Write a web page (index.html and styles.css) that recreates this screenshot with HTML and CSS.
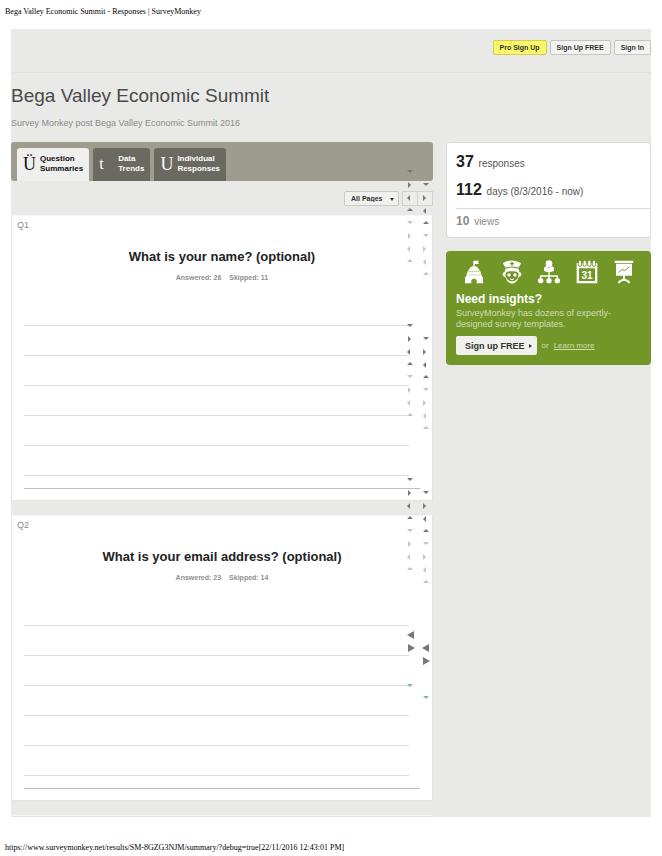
FILE: index.html
```html
<!DOCTYPE html>
<html lang="en">
<head>
    <meta charset="UTF-8">
    <meta name="viewport" content="width=device-width, initial-scale=1.0">
    <title>Bega Valley Economic Summit - Responses | SurveyMonkey</title>
    <link rel="stylesheet" href="styles.css">
</head>
<body>
    <div class="print-line">Bega Valley Economic Summit - Responses | SurveyMonkey</div>

    <div class="page">
        <header class="topbar">
            <button class="btn pro">Pro Sign Up</button>
            <button class="btn">Sign Up FREE</button>
            <button class="btn">Sign In</button>
        </header>

        <h1>Bega Valley Economic Summit</h1>
        <p class="subtitle">Survey Monkey post Bega Valley Economic Summit 2016</p>

        <div class="columns">
            <main class="results">
                <nav class="tabs">
                    <a href="#" class="tab active"><span class="glyph">Ü</span><span>Question<br>Summaries</span></a>
                    <a href="#" class="tab trends"><span class="glyph">t</span><span>Data<br>Trends</span></a>
                    <a href="#" class="tab"><span class="glyph">U</span><span>Individual<br>Responses</span></a>
                </nav>

                <div class="toolbar">
                    <div class="page-select">
                        <select aria-label="Pages">
                            <option>All Pages</option>
                        </select>
                    </div>
                    <div class="pager">
                        <button aria-label="Previous page"></button>
                        <button aria-label="Next page"></button>
                    </div>
                </div>

                <section class="card">
                    <div class="number">Q1</div>
                    <h2>What is your name? (optional)</h2>
                    <p class="counts"><span>Answered: 26</span><span>Skipped: 11</span></p>
                    <ul class="answers">
                        <li></li>
                        <li></li>
                        <li></li>
                        <li></li>
                        <li></li>
                    </ul>
                </section>

                <section class="card">
                    <div class="number">Q2</div>
                    <h2>What is your email address? (optional)</h2>
                    <p class="counts"><span>Answered: 23</span><span>Skipped: 14</span></p>
                    <ul class="answers">
                        <li></li>
                        <li></li>
                        <li></li>
                        <li></li>
                        <li></li>
                    </ul>
                </section>

                <div class="card next"></div>

                <!-- scroller arrows -->
                <svg class="arrows" width="33" height="560" viewBox="400 142 33 560" aria-hidden="true">
                    <defs>
                        <path id="d" d="M-3-1H3L0 2Z"/>
                        <path id="u" d="M-3 1H3L0-2Z"/>
                        <path id="r" d="M-1-3V3L2 0Z"/>
                        <path id="l" d="M1-3V3L-2 0Z"/>
                        <path id="R" d="M-3-4V4L4 0Z"/>
                        <path id="L" d="M3-4V4L-4 0Z"/>
                        <g id="set">
                            <g fill="#777">
                                <use href="#d" x="10" y="0"/>
                                <use href="#r" x="9" y="14"/>
                                <use href="#l" x="9" y="27"/>
                                <use href="#u" x="10" y="39"/>
                                <use href="#d" x="26" y="13"/>
                                <use href="#r" x="24" y="27"/>
                                <use href="#l" x="25" y="40"/>
                                <use href="#u" x="26" y="52"/>
                            </g>
                            <g fill="#c4c4c4">
                                <use href="#d" x="10" y="51"/>
                                <use href="#r" x="9" y="65"/>
                                <use href="#l" x="9" y="78"/>
                                <use href="#u" x="10" y="90"/>
                                <use href="#d" x="26" y="64"/>
                                <use href="#r" x="24" y="78"/>
                                <use href="#l" x="25" y="91"/>
                                <use href="#u" x="26" y="103"/>
                            </g>
                        </g>
                    </defs>
                    <use href="#set" x="400" y="171"/>
                    <use href="#set" x="400" y="325"/>
                    <use href="#set" x="400" y="479"/>
                    <g fill="#777">
                        <use href="#L" x="411" y="635"/>
                        <use href="#R" x="411" y="648"/>
                        <use href="#L" x="426" y="648"/>
                        <use href="#R" x="426" y="661"/>
                    </g>
                    <g fill="#7fb5a8">
                        <use href="#d" x="410" y="685"/>
                        <use href="#d" x="426" y="697"/>
                    </g>
                </svg>
            </main>

            <aside class="sidebar">
                <div class="stats">
                    <p><strong>37</strong> responses</p>
                    <p><strong>112</strong> days (8/3/2016 - now)</p>
                    <p class="views"><strong>10</strong> views</p>
                </div>

                <div class="promo">
                    <div class="icons">
                        <svg viewBox="0 0 66 72" fill="#fff">
                            <path d="M31 2h17l-3 5 3 5H35v6q13 4 15 16H16q2-12 15-16Z"/>
                            <path d="M14 34h38l5 17H9ZM6 51h54v19H41V60q-8-8-16 0v10H6Z"/>
                            <path d="M20 35h28M17 45h34" stroke="#729728" stroke-width="2" stroke-dasharray="3 3"/>
                        </svg>
                        <svg viewBox="0 0 66 72" fill="#fff">
                            <path d="M6 9Q33-6 60 9q-2 8-8 14-19-7-38 0-6-6-8-14Z"/>
                            <path d="M33 5v12M27 11h12" stroke="#729728" stroke-width="4"/>
                            <path fill-rule="evenodd" d="M13 27q20-9 40 0l2 9q8 2 6 9-2 6-8 6-6 19-20 20-14-1-20-20-6 0-8-6-2-7 6-9ZM33 34q-20-2-20 11 4 19 20 19t20-19q0-13-20-11Z"/>
                            <circle cx="24" cy="45" r="5"/>
                            <circle cx="42" cy="45" r="5"/>
                            <path d="M27 57q6 3 12 0" fill="none" stroke="#fff" stroke-width="3"/>
                        </svg>
                        <svg viewBox="0 0 66 72" fill="#fff">
                            <circle cx="33" cy="11" r="10"/>
                            <path d="M18 32V23q3-4 9-4l6 6 6-6q6 0 9 4v9q-4 4-15 4t-15-4Z"/>
                            <path d="M33 35v25M8 58V48h50v10" fill="none" stroke="#fff" stroke-width="4"/>
                            <circle cx="8" cy="62" r="8"/>
                            <circle cx="33" cy="62" r="8"/>
                            <circle cx="58" cy="62" r="8"/>
                        </svg>
                        <svg viewBox="0 0 66 72" fill="#fff">
                            <path fill-rule="evenodd" d="M2 9h62v61H2ZM9 25v38h48V25Z"/>
                            <g fill="#fff" stroke="#729728" stroke-width="3">
                                <rect x="7" y="1" width="10" height="18" rx="5"/>
                                <rect x="21" y="1" width="10" height="18" rx="5"/>
                                <rect x="35" y="1" width="10" height="18" rx="5"/>
                                <rect x="49" y="1" width="10" height="18" rx="5"/>
                            </g>
                            <text x="33" y="56" class="day">31</text>
                        </svg>
                        <svg viewBox="0 0 66 72" fill="#fff">
                            <path d="M5 2h56v7H5ZM9 11h48v36H9Z"/>
                            <path d="M17 37l11-9 7 4 14-12" fill="none" stroke="#729728" stroke-width="3"/>
                            <path d="M33 46v13M17 69q4-9 16-10 12 1 16 10" fill="none" stroke="#fff" stroke-width="6"/>
                        </svg>
                    </div>
                    <h3>Need insights?</h3>
                    <p>SurveyMonkey has dozens of expertly-designed survey templates.</p>
                    <div class="actions">
                        <button>Sign up FREE</button>
                        <span>or</span>
                        <a href="#">Learn more</a>
                    </div>
                </div>
            </aside>
        </div>
    </div>

    <div class="print-line url">https://www.surveymonkey.net/results/SM-8GZG3NJM/summary/?debug=true[22/11/2016 12:43:01 PM]</div>
</body>
</html>
```
FILE: styles.css
```css
* {
    box-sizing: border-box;
}

body {
    margin: 0;
    background-color: #fff;
    font-family: 'Liberation Sans', Arial, sans-serif;
    color: #333;
}

h1, h2, h3, p, ul {
    margin: 0;
    padding: 0;
}

button, select {
    font-family: inherit;
    font-weight: bold;
    color: #333;
    cursor: pointer;
}

.print-line {
    padding: 7px 5px 12px;
    font-family: 'Liberation Serif', 'Times New Roman', serif;
    font-size: 8px;
    line-height: 10px;
    color: #000;
}

.print-line.url {
    padding: 26px 5px 0;
}

.page {
    margin: 0 11px;
    background-color: #e9e9e8;
}

.topbar {
    display: flex;
    justify-content: flex-end;
    gap: 3px;
    height: 44px;
    padding-top: 11px;
    border-bottom: 1px solid #e1e1e0;
}

.btn {
    height: 15px;
    padding: 0 6px;
    border: 1px solid #c4c4c0;
    border-radius: 2px;
    background-color: #f3f3f1;
    font-size: 7px;
    line-height: 12px;
}

.btn.pro {
    background-color: #fbf768;
    border-color: #d2cd5a;
}

h1 {
    padding-top: 11px;
    font-size: 19px;
    line-height: 24px;
    font-weight: normal;
    color: #4a4a4a;
}

.subtitle {
    padding: 9px 0 13px;
    font-size: 9px;
    line-height: 12px;
    color: #8a8a8a;
}

.columns {
    display: grid;
    grid-template-columns: minmax(0, 1fr) 205px;
    gap: 13px;
    align-items: start;
}

.results {
    position: relative;
}

.tabs {
    display: flex;
    gap: 4px;
    height: 39px;
    padding: 6px 6px 0;
    border-radius: 3px;
    background-color: #9d9c8e;
}

.tab {
    display: flex;
    gap: 4px;
    padding: 6px 6px 0;
    border-radius: 3px 3px 0 0;
    background-color: #6a6a60;
    color: #fff;
    font-size: 8px;
    line-height: 10px;
    font-weight: bold;
    text-decoration: none;
}

.tab.active {
    background-color: #efefed;
    color: #111;
}

.tab .glyph {
    width: 13px;
    font-family: 'Liberation Serif', 'Times New Roman', serif;
    font-size: 18px;
    line-height: 20px;
    font-weight: normal;
}

.tab.trends .glyph {
    width: 15px;
    font-size: 16px;
}

.toolbar {
    display: flex;
    justify-content: flex-end;
    gap: 3px;
    height: 34px;
    padding-top: 10px;
}

.page-select {
    position: relative;
}

.page-select::after {
    content: '';
    position: absolute;
    right: 5px;
    top: 7px;
    border: 2px solid transparent;
    border-top: 3px solid #333;
    border-bottom: 0;
}

.page-select select {
    appearance: none;
    display: block;
    width: 55px;
    height: 15px;
    padding: 0 6px;
    border: 1px solid #c8c8c4;
    border-radius: 2px;
    background-color: #f1f1ef;
    font-size: 7px;
}

.pager {
    display: flex;
}

.pager button {
    width: 16px;
    height: 15px;
    padding: 0;
    border: 1px solid #d2d2ce;
    background-color: #ececea;
}

.pager button + button {
    width: 15px;
    border-left: 0;
}

.card {
    height: 286px;
    margin-bottom: 14px;
    padding: 4px 12px 0;
    border: 1px solid #e3e3e2;
    border-top-color: #f4f4f3;
    background-color: #fff;
}

.card.next {
    height: 2px;
    margin: 0;
    padding: 0;
}

.number {
    margin-left: -7px;
    font-size: 9px;
    line-height: 10px;
    color: #8a8a8a;
}

.card h2 {
    margin-top: 18px;
    font-size: 13px;
    line-height: 18px;
    text-align: center;
    color: #222;
}

.counts {
    display: flex;
    justify-content: center;
    gap: 8px;
    margin-top: 7px;
    font-size: 7px;
    line-height: 10px;
    font-weight: bold;
    color: #8f8f8f;
}

.answers {
    margin-top: 42px;
    padding-bottom: 12px;
    border-bottom: 1px solid #bdbdbd;
    list-style: none;
}

.answers li {
    height: 30px;
    margin-right: 11px;
    border-bottom: 1px solid #dcdcdc;
}

.answers li:first-child {
    height: 31px;
    border-top: 1px solid #dcdcdc;
}

.arrows {
    position: absolute;
    top: 0;
    right: 0;
    pointer-events: none;
}

.stats {
    padding: 9px 0 0 9px;
    border: 1px solid #d9d9d8;
    border-radius: 4px;
    background-color: #fff;
}

.stats p {
    height: 19px;
    margin-bottom: 9px;
    font-size: 10px;
    line-height: 19px;
    color: #555;
}

.stats strong {
    margin-right: 2px;
    font-size: 16px;
    color: #222;
}

.stats .views {
    height: 29px;
    margin: 0;
    padding-top: 3px;
    border-top: 1px solid #d9d9d9;
    color: #8a8a8a;
}

.stats .views strong {
    font-size: 12px;
    color: #8a8a8a;
}

.promo {
    margin-top: 13px;
    padding: 9px 10px 10px;
    border-radius: 4px;
    background-color: #729728;
    color: #fff;
}

.icons {
    display: flex;
    justify-content: space-between;
    padding: 0 6px 0 7px;
}

.icons svg {
    width: 22px;
    height: 24px;
}

.day {
    font-size: 30px;
    font-weight: bold;
    text-anchor: middle;
}

.promo h3 {
    margin-top: 7px;
    font-size: 12px;
    line-height: 16px;
}

.promo p {
    margin-top: 1px;
    font-size: 9px;
    line-height: 11px;
    color: #d0dcb4;
}

.actions {
    display: flex;
    align-items: center;
    gap: 5px;
    margin-top: 6px;
    font-size: 8px;
    color: #d0dcb4;
}

.actions button {
    display: flex;
    align-items: center;
    gap: 4px;
    height: 19px;
    padding: 0 5px 0 9px;
    border: 0;
    border-radius: 2px;
    background-color: #f0f0ed;
    font-size: 9px;
}

.actions button::after {
    content: '';
    border: 2px solid transparent;
    border-left: 3px solid #333;
    border-right: 0;
}

.actions a {
    color: #d0dcb4;
}
```
